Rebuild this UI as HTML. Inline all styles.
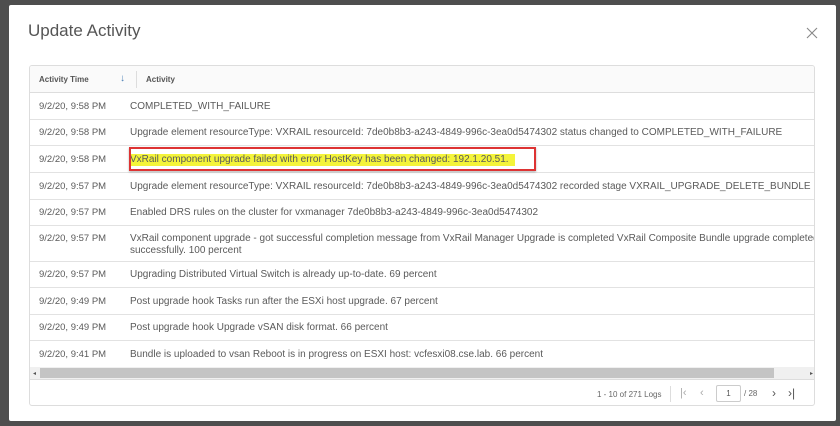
<!DOCTYPE html>
<html><head><style>
*{margin:0;padding:0;box-sizing:border-box}
body{width:840px;height:426px;background:#4e4e4e;font-family:"Liberation Sans",sans-serif;position:relative;overflow:hidden}
.modal{position:absolute;left:9px;top:5px;width:827px;height:416px;background:#fff;border-radius:2px}
h1{position:absolute;left:19px;top:16px;font-weight:normal;font-size:17px;color:#555}
.x{position:absolute;left:797px;top:22px;width:12px;height:12px}
.tbl{position:absolute;left:20px;top:60px;width:786px;height:341px;border:1px solid #ddd;border-radius:3px;overflow:hidden}
.hd{height:27px;background:#fafafa;border-bottom:1px solid #ddd;position:relative;font-size:8px;color:#555;font-weight:bold}
.row{position:relative;border-bottom:1px solid #e2e2e2;font-size:10px;color:#5a5a5a;white-space:nowrap}
.t{position:absolute;left:9px;font-size:9.5px}
.a{position:absolute;left:100px;line-height:12px;margin-top:1px}
.sb{position:absolute;left:0;top:301px;width:786px;height:13px;background:#f0f0f0;border-bottom:1px solid #ddd}
.ft{position:absolute;left:0;top:315px;width:786px;height:26px;font-size:8px;color:#666}
</style></head><body>
<div class="modal">
<h1>Update Activity</h1>
<svg class="x" viewBox="0 0 12 12"><path d="M1 1L11 11M11 1L1 11" stroke="#888" stroke-width="1.1"/></svg>
<div class="tbl">
<div class="hd"><span style="position:absolute;left:9px;top:9px">Activity Time</span><span style="position:absolute;left:90px;top:7px;color:#4a7fb5;font-weight:normal;font-size:10px">↓</span><span style="position:absolute;left:106px;top:5px;width:1px;height:17px;background:#ddd"></span><span style="position:absolute;left:116px;top:9px">Activity</span></div>
<div class="row" style="height:27px"><span class="t" style="top:8px">9/2/20, 9:58 PM</span><span class="a" style="top:7px">COMPLETED_WITH_FAILURE</span></div>
<div class="row" style="height:26px"><span class="t" style="top:7px">9/2/20, 9:58 PM</span><span class="a" style="top:6px">Upgrade element resourceType: VXRAIL resourceId: 7de0b8b3-a243-4849-996c-3ea0d5474302 status changed to COMPLETED_WITH_FAILURE</span></div>
<div class="row" style="height:27px"><span class="t" style="top:8px">9/2/20, 9:58 PM</span><span class="a" style="top:7px;background:#f4f43a;padding-right:6px">VxRail component upgrade failed with error HostKey has been changed: 192.1.20.51.</span><span style="position:absolute;left:99px;top:1px;width:407px;height:24px;border:2px solid #d33;box-shadow:0 1px 2px rgba(0,0,0,.3)"></span></div>
<div class="row" style="height:27px"><span class="t" style="top:8px">9/2/20, 9:57 PM</span><span class="a" style="top:7px">Upgrade element resourceType: VXRAIL resourceId: 7de0b8b3-a243-4849-996c-3ea0d5474302 recorded stage VXRAIL_UPGRADE_DELETE_BUNDLE</span></div>
<div class="row" style="height:26px"><span class="t" style="top:7px">9/2/20, 9:57 PM</span><span class="a" style="top:6px">Enabled DRS rules on the cluster for vxmanager 7de0b8b3-a243-4849-996c-3ea0d5474302</span></div>
<div class="row" style="height:36px"><span class="t" style="top:7px">9/2/20, 9:57 PM</span><span class="a" style="top:6px">VxRail component upgrade - got successful completion message from VxRail Manager Upgrade is completed VxRail Composite Bundle upgrade completed<br>successfully. 100 percent</span></div>
<div class="row" style="height:26px"><span class="t" style="top:7px">9/2/20, 9:57 PM</span><span class="a" style="top:6px">Upgrading Distributed Virtual Switch is already up-to-date. 69 percent</span></div>
<div class="row" style="height:27px"><span class="t" style="top:8px">9/2/20, 9:49 PM</span><span class="a" style="top:7px">Post upgrade hook Tasks run after the ESXi host upgrade. 67 percent</span></div>
<div class="row" style="height:26px"><span class="t" style="top:7px">9/2/20, 9:49 PM</span><span class="a" style="top:6px">Post upgrade hook Upgrade vSAN disk format. 66 percent</span></div>
<div class="row" style="height:27px;border:none"><span class="t" style="top:8px">9/2/20, 9:41 PM</span><span class="a" style="top:7px">Bundle is uploaded to vsan Reboot is in progress on ESXI host: vcfesxi08.cse.lab. 66 percent</span></div>
<div class="sb"><span style="position:absolute;left:3px;top:3px;font-size:6px;color:#555">◂</span><span style="position:absolute;left:10px;top:1px;width:734px;height:10px;background:#c4c4c4"></span><span style="position:absolute;right:3px;top:3px;font-size:6px;color:#555">▸</span></div>
<div class="ft">
<span style="position:absolute;left:567px;top:9px">1 - 10 of 271 Logs</span>
<span style="position:absolute;left:640px;top:5px;width:1px;height:16px;background:#ddd"></span>
<span style="position:absolute;left:650px;top:6px;font-size:11px;color:#aaa">|‹</span>
<span style="position:absolute;left:670px;top:6px;font-size:11px;color:#aaa">‹</span>
<span style="position:absolute;left:686px;top:4px;width:25px;height:17px;border:1px solid #ccc;border-radius:2px;text-align:center;line-height:15px;color:#555">1</span>
<span style="position:absolute;left:714px;top:8px;color:#666">/ 28</span>
<span style="position:absolute;left:742px;top:5px;font-size:12px;color:#555">›</span>
<span style="position:absolute;left:758px;top:5px;font-size:12px;color:#555">›|</span>
</div>
</div>
</div>
</body></html>
